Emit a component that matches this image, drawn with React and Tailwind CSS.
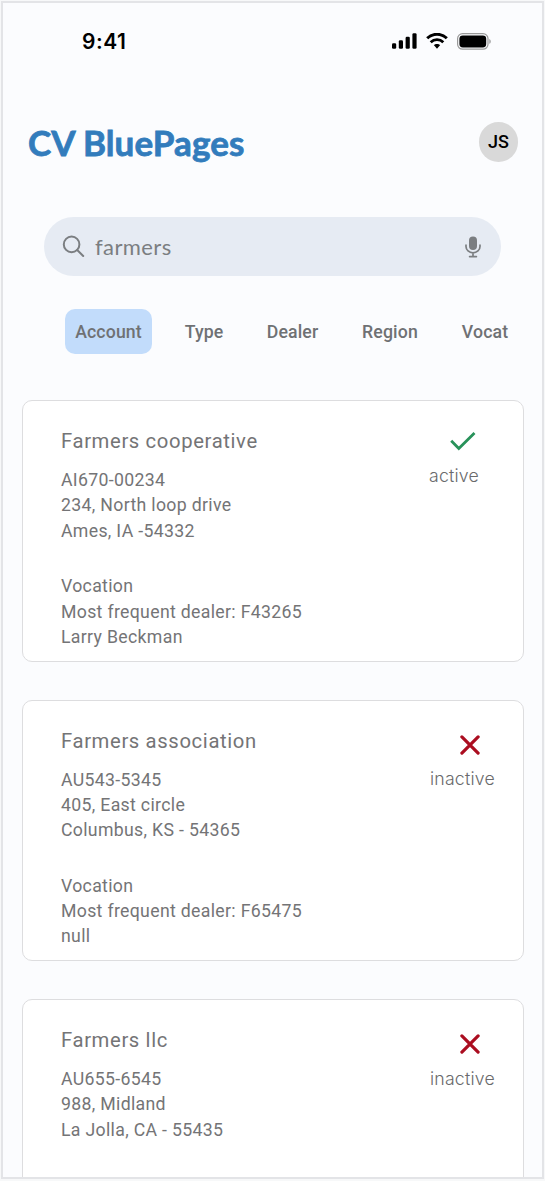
import React, { useState } from 'react';

const TABS = [
  { name: 'Account', className: 'ml-[62px] w-[87px]' },
  { name: 'Type', className: 'ml-[21px] w-[62px]' },
  { name: 'Dealer', className: 'ml-[20px] w-[75px]' },
  { name: 'Region', className: 'ml-[20.500px] w-[79px]' },
  { name: 'Vocat', className: 'ml-[20px] w-[71px]' },
];

const ACCOUNTS = [
  {
    name: 'Farmers cooperative',
    address: ['AI670-00234', '234, North loop drive', 'Ames, IA -54332'],
    dealer: 'F43265',
    contact: 'Larry Beckman',
    active: true,
  },
  {
    name: 'Farmers association',
    address: ['AU543-5345', '405, East circle', 'Columbus, KS - 54365'],
    dealer: 'F65475',
    contact: 'null',
    active: false,
  },
  {
    name: 'Farmers llc',
    address: ['AU655-6545', '988, Midland', 'La Jolla, CA - 55435'],
    active: false,
  },
];

const StatusBar = () => (
  <div className="flex h-[76px] shrink-0 items-center justify-between pl-[79px] pr-[51px]">
    <span className="font-['Inter',sans-serif] text-[21px] font-semibold leading-none tracking-[0.500px] text-black">9:41</span>
    <div className="flex items-center">
      <svg width="25" height="16" viewBox="0 0 25 16" fill="#000">
        <rect x="0" y="10.2" width="4.2" height="5.6" rx="1.3" />
        <rect x="6.8" y="7.2" width="4.2" height="8.6" rx="1.3" />
        <rect x="13.6" y="3.8" width="4.2" height="12" rx="1.3" />
        <rect x="20.4" y="0.2" width="4.2" height="15.6" rx="1.3" />
      </svg>
      <svg className="ml-[9px]" width="22" height="16" viewBox="0 0 22 16" fill="none" stroke="#000">
        <path d="M1.2 5.3a14 14 0 0 1 19.6 0" strokeWidth="3" />
        <path d="M4.7 9.2a9 9 0 0 1 12.6 0" strokeWidth="2.8" />
        <path d="M11 10.9c-1.3 0-2.4.5-3.2 1.2L11 15.8l3.2-3.7c-.8-.7-1.9-1.2-3.2-1.2z" fill="#000" stroke="none" />
      </svg>
      <svg className="ml-[9px]" width="34" height="17" viewBox="0 0 34 17" fill="none">
        <rect x="0.6" y="0.6" width="30.4" height="15.6" rx="5" stroke="#999" strokeWidth="1.2" />
        <rect x="2.4" y="2.4" width="26.8" height="12" rx="3.4" fill="#000" />
        <path d="M32.3 6v4.8c1.9-.8 1.9-4 0-4.8z" fill="#999" />
      </svg>
    </div>
  </div>
);

const SearchBar = () => (
  <div className="mx-[41px] mt-[55.5px] flex h-[59px] shrink-0 items-center rounded-full bg-[#e6ebf3] pl-[18px] pr-[20px]">
    <svg width="23" height="23" viewBox="0 0 23 23" fill="none" stroke="#7b7e81" strokeWidth="2">
      <circle cx="9.6" cy="9.4" r="7.8" />
      <path d="M15.2 15l6 6" strokeLinecap="round" />
    </svg>
    <span className="ml-[10px] flex-1 font-['Lato',sans-serif] text-[22px] leading-none tracking-[0.4px] text-[#7b7e81]">
      farmers
    </span>
    <svg width="16" height="22" viewBox="0 0 16 22" fill="none">
      <rect x="4" y="0.4" width="8" height="13.6" rx="4" fill="#7b7e81" />
      <path d="M1 9.2v1.2a7 6.4 0 0 0 14 0V9.2M8 17v3.5M4.6 20.6h6.8" stroke="#7b7e81" strokeWidth="1.7" strokeLinecap="round" />
    </svg>
  </div>
);

const AccountCard = ({ account }) => (
  <div className="flex h-[261.5px] shrink-0 justify-between rounded-[10px] border-[1.5px] border-[#dddddf] bg-white pl-[38.5px] pt-[25px] text-[#747476]">
    <div className="font-['Roboto',sans-serif] text-[17.7px] leading-[25.3px] tracking-[0.32px]">
      <h2 className="text-[20.25px] leading-[30px] tracking-[0.63px]">{account.name}</h2>
      <div className="mt-[12px]">
        {account.address.map((line) => (
          <p key={line}>{line}</p>
        ))}
      </div>
      {account.dealer && (
        <div className="mt-[30.5px]">
          <p>Vocation</p>
          <p>Most frequent dealer: {account.dealer}</p>
          <p>{account.contact}</p>
        </div>
      )}
    </div>

    <div className="w-[94px] font-['Inter',sans-serif] text-[17.7px] font-light leading-[24px] tracking-[0.2px] text-[#6a6a6c]">
      {account.active ? (
        <>
          <svg className="ml-[21px] mt-[6px]" width="26" height="19" viewBox="0 0 26 19" fill="none">
            <path d="M2.2 9.8l6.6 6.7L23.5 2" stroke="#28925a" strokeWidth="2.8" strokeLinecap="square" />
          </svg>
          <p className="mt-[12.5px]">active</p>
        </>
      ) : (
        <>
          <svg className="ml-[30.5px] mt-[9px]" width="20" height="20" viewBox="0 0 20 20" fill="none">
            <path d="M1.9 1.9l16.2 16.2M18.1 1.9L1.9 18.1" stroke="#ab0d20" strokeWidth="3.2" strokeLinecap="round" />
          </svg>
          <p className="ml-px mt-[12.5px]">inactive</p>
        </>
      )}
    </div>
  </div>
);

const App = () => {
  const [tab, setTab] = useState('Account');

  return (
    <div className="h-[1181px] overflow-hidden bg-[#f7f8f9] px-px pt-px">
      <div className="flex h-[1178px] flex-col overflow-hidden border-2 border-[#e3e4e7] bg-[#fbfcfe]">
        <StatusBar />

        <header className="mt-[42.5px] flex h-[40px] shrink-0 items-center justify-between pl-[25px] pr-[24px]">
          <h1 className="pt-px font-['Lato',sans-serif] text-[35px] font-bold leading-none tracking-[0.1px] text-[#327cbc] [-webkit-text-stroke:0.8px_#327cbc]">
            CV BluePages
          </h1>
          <div className="flex h-[40px] w-[39px] items-center justify-center rounded-full bg-[#d9d9d9] font-['Roboto',sans-serif] text-[18px] font-medium text-black">
            JS
          </div>
        </header>

        <SearchBar />

        <nav className="mt-[33px] flex h-[45px] shrink-0 font-['Roboto',sans-serif] text-[17.7px] font-medium tracking-[0.13px] text-[#6f7174]">
          {TABS.map((item) => (
            <button
              key={item.name}
              onClick={() => setTab(item.name)}
              className={`${item.className} shrink-0 rounded-[10px] pt-px text-center ${tab === item.name ? 'bg-[#c2dcfb]' : ''}`}
            >
              {item.name}
            </button>
          ))}
        </nav>

        <main className="mt-[46px] flex flex-col gap-[38px] pl-[18.5px] pr-[18px]">
          {ACCOUNTS.map((account) => (
            <AccountCard key={account.name} account={account} />
          ))}
        </main>
      </div>
    </div>
  );
};

export default App;
